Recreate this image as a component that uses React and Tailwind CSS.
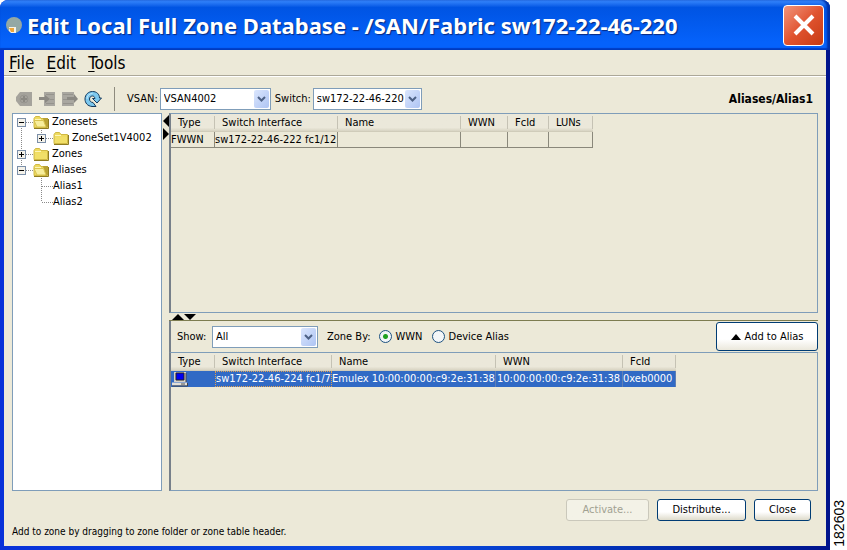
import { useState } from "react";

const tree = [
  { label: "Zonesets", level: 0, toggle: "minus", open: true, rootLine: "bottom" },
  { label: "ZoneSet1V4002", level: 1, toggle: "plus", rootLine: "full" },
  { label: "Zones", level: 0, toggle: "plus", rootLine: "full" },
  { label: "Aliases", level: 0, toggle: "minus", open: true, rootLine: "top" },
  { label: "Alias1", level: 1, leaf: true },
  { label: "Alias2", level: 1, leaf: true, last: true },
];

const memberColumns = [
  { name: "Type", width: "w-[44px]" },
  { name: "Switch Interface", width: "w-[123px]" },
  { name: "Name", width: "w-[123px]" },
  { name: "WWN", width: "w-[47px]" },
  { name: "FcId", width: "w-[41px]" },
  { name: "LUNs", width: "w-[44px]" },
];

const endPortColumns = [
  { name: "Type", width: "w-[44px]" },
  { name: "Switch Interface", width: "w-[117px]" },
  { name: "Name", width: "w-[164px]" },
  { name: "WWN", width: "w-[127px]" },
  { name: "FcId", width: "w-[53px]" },
];

// One 20x16 cell of the tree's guide lines
function Guide({ line, toggle, branch }) {
  return (
    <svg width="20" height="16" className="shrink-0" shapeRendering="crispEdges">
      <g stroke="#8a8a8a" strokeDasharray="1 1">
        {line === "full" && <path d="M8.5 0V16" />}
        {line === "top" && <path d="M8.5 0V8" />}
        {line === "bottom" && <path d="M8.5 8V16" />}
        {(toggle || branch) && <path d="M9 8.5H20" />}
      </g>
      {toggle && (
        <>
          <rect x="4.5" y="4.5" width="8" height="8" fill="#f4f2ea" stroke="#7b8fa8" />
          <path d="M6 8.5H11" stroke="#000" />
          {toggle === "plus" && <path d="M8.5 6V11" stroke="#000" />}
        </>
      )}
    </svg>
  );
}

function Folder({ open }) {
  return (
    <svg width="16" height="16" className="shrink-0">
      <path d="M1 4.5 2.5 2.5H6.5L8 4.5H14.5V13.5H1Z" fill="#efdb60" stroke="#d0b944" />
      <path d="M2 5.5H8" stroke="#fdf6b8" />
      {open ? (
        <>
          <path d="M10 4H15V13L12 14Z" fill="#b9a233" />
          <path d="M1 6.5H10.5L13 13H4Z" fill="#f8ee9c" stroke="#d9c44f" />
        </>
      ) : (
        <path d="M2 7H14V13H2Z" fill="#f1df68" />
      )}
      <path d="M1 14.5H15.5V5" fill="none" stroke="#8f7c22" />
    </svg>
  );
}

function Select({ id, options, width }) {
  return (
    <span className={"relative flex h-[22px] " + width}>
      <select
        id={id}
        className="w-full appearance-none border border-[#7f9db9] bg-white pl-[3px] pr-4 text-[11px] leading-4 outline-none"
      >
        {options.map((o) => (
          <option key={o}>{o}</option>
        ))}
      </select>
      <svg
        width="15"
        height="18"
        className="pointer-events-none absolute right-[2px] top-[2px] rounded-[2px] bg-linear-to-br from-[#dbe6fd] to-[#aec4f3]"
      >
        <path d="M4 7 7.5 10.5 11 7" fill="none" stroke="#4d6185" strokeWidth="2" />
      </svg>
    </span>
  );
}

function HeaderRow({ columns }) {
  return (
    <thead>
      <tr className="h-[18px]">
        {columns.map((c) => (
          <th
            key={c.name}
            className={
              "border-b border-b-[#d0ccba] bg-linear-to-b from-[#ebe8da] from-80% to-[#d8d4c3] p-0 text-left font-normal " +
              c.width
            }
          >
            <div className="h-[13px] border-r border-[#c5c2b4] pl-[7px] leading-[13px]">{c.name}</div>
          </th>
        ))}
      </tr>
    </thead>
  );
}

function Computer() {
  return (
    <svg width="18" height="15" role="img" aria-label="Host">
      <path d="M3 0H15V10H3Z" fill="#d4d0c8" />
      <path d="M5 1H13V8H5Z" fill="#0000f0" stroke="#222" />
      <path d="M1 10.5H16V13.5H1Z" fill="#e4e0d8" />
      <path d="M1 14H16.5V11M15 1V10" fill="none" stroke="#444" />
      <path d="M10 12H14" stroke="#555" />
    </svg>
  );
}

function Toolbar() {
  const tool = "h-4 w-[18px]";
  return (
    <div className="flex items-center gap-[5px]">
      <button aria-label="Back" disabled className={tool}>
        <svg width="18" height="16">
          <path d="M5 1H17V15H5L1 10V6Z" fill="#a5a39c" />
          <circle cx="9" cy="8" r="4" fill="none" stroke="#96948e" />
          <path d="M6 8H12M9 5V11" stroke="#8b8983" strokeWidth="2" />
        </svg>
      </button>
      <button aria-label="Insert" disabled className={tool}>
        <svg width="18" height="16">
          <path d="M6 1H17V15H6Z" fill="#a9a7a0" />
          <path d="M1 6H7V4L12 8 7 12V9H1Z" fill="#8b8983" />
          <path d="M8 3.500H16M12 8.500H16M8 12.500H16" stroke="#95938d" />
        </svg>
      </button>
      <button aria-label="Remove" disabled className={tool}>
        <svg width="18" height="16">
          <path d="M1 1H13V15H1Z" fill="#a9a7a0" />
          <path d="M6 6H13V3L17 8 13 12V9H6Z" fill="#8b8983" />
          <path d="M2 3.500H12M2 8.500H6M2 12.500H12" stroke="#95938d" />
        </svg>
      </button>
      <button aria-label="Refresh" className={tool}>
        <svg width="18" height="16">
          <path
            d="M12 15.500H8C3.500 15 1 12 1 8C1 3.500 4.500.5 8.500.5C12.500.5 15.500 3 15.500 7H17.500L13 12 8.500 7.500H11C10.500 5.500 9.500 5 8.500 5C6.500 5 5.500 6.500 5.500 8C5.500 10 7 11.500 9 11.500Z"
            fill="#7cc8ee"
            stroke="#14395c"
          />
          <path d="M3 8C3 5 5 2.500 8.500 2.500" fill="none" stroke="#c4e9fb" />
        </svg>
      </button>
    </div>
  );
}

function MenuItem({ children }) {
  return (
    <button>
      <span className="underline underline-offset-2">{children[0]}</span>
      {children.slice(1)}
    </button>
  );
}

function PushButton({ children, width, disabled }) {
  return (
    <button
      disabled={disabled}
      className={
        "h-[22px] rounded-[3px] border border-[#003c74] bg-linear-to-b from-white from-60% to-[#dedbcb] disabled:border-[#cac8bb] disabled:from-[#f3f2e7] disabled:to-[#f3f2e7] disabled:text-[#a1a192] " +
        width
      }
    >
      {children}
    </button>
  );
}

export default function App() {
  const [zoneBy, setZoneBy] = useState("wwn");

  const radio =
    "size-[13px] appearance-none rounded-full border border-[#1c5180] bg-[#f3f6f8] checked:bg-[radial-gradient(circle,#21a121_0_2px,#f3f6f8_3px)]";

  return (
    <div className="flex min-h-screen bg-white font-['DejaVu_Sans_Condensed','DejaVu_Sans',sans-serif] text-[11px] leading-4 text-black">
      <div className="flex min-w-0 flex-1 flex-col rounded-t-lg bg-linear-to-r from-[#0831d9] via-[#0b4ae0] to-[#00138c] px-1 pb-1">
        {/* Title bar */}
        <header className="-mx-1 flex h-[50px] shrink-0 items-center gap-1 rounded-t-lg bg-linear-to-b from-[#3a8bff] via-[#0054e3] via-15% to-[#0562fb] to-85% pl-[5px] pr-[6px] shadow-[inset_-3px_0_2px_#0030a8,inset_0_-2px_1px_#0040c8]">
          <svg width="18" height="18" className="shrink-0">
            <circle cx="9" cy="9" r="8" fill="#93a8a5" />
            <path d="M4 11H11V17H6L4 15Z" fill="#f6f2e6" />
            <path d="M4 12H9V16H6Z" fill="#eda63c" />
          </svg>
          <h1 className="min-w-0 flex-1 truncate font-['Noto_Sans',sans-serif] text-[22px] font-bold leading-8 text-white [text-shadow:1px_1px_1px_#0a2a80]">
            Edit Local Full Zone Database - /SAN/Fabric sw172-22-46-220
          </h1>
          <button
            aria-label="Close window"
            className="flex size-[41px] items-center justify-center rounded-[4px] border border-white bg-linear-to-br from-[#f0937a] via-[#e0532f] to-[#c63a10]"
          >
            <svg width="22" height="22">
              <path d="M2 2 20 20M20 2 2 20" stroke="#fff" strokeWidth="4" />
            </svg>
          </button>
        </header>

        <div className="flex flex-1 flex-col bg-[#ece9d8]">
          <nav className="flex h-[26px] items-center gap-3 border-b border-[#aca899] px-[5px] text-[17px]">
            <MenuItem>File</MenuItem>
            <MenuItem>Edit</MenuItem>
            <MenuItem>Tools</MenuItem>
          </nav>

          <main className="flex flex-1 flex-col border-t border-white px-2">
            <div className="flex h-9 items-center pt-2 pl-[3px]">
              <Toolbar />
              <div className="ml-3 h-6 border-l border-[#8e8b7e]" />
              <label htmlFor="vsan" className="ml-3 mr-[2px]">VSAN:</label>
              <Select id="vsan" width="w-[111px]" options={["VSAN4002"]} />
              <label htmlFor="switch" className="ml-1 mr-[2px]">Switch:</label>
              <Select id="switch" width="w-[109px]" options={["sw172-22-46-220"]} />
              <div className="ml-auto pr-[5px] text-xs font-bold">Aliases/Alias1</div>
            </div>

            <div className="flex flex-1">
              <ul className="w-[150px] shrink-0 border border-[#7f9db9] bg-white">
                {tree.map((n) => (
                  <li key={n.label} className="flex h-4 items-center whitespace-nowrap">
                    <Guide line={n.rootLine} toggle={n.level === 0 && n.toggle} />
                    {n.level === 1 && (
                      <Guide
                        line={n.leaf && !n.last ? "full" : "top"}
                        toggle={n.toggle}
                        branch={n.leaf}
                      />
                    )}
                    {!n.leaf && <Folder open={n.open} />}
                    <span className={n.leaf ? "" : "pl-[3px]"}>{n.label}</span>
                  </li>
                ))}
              </ul>

              {/* Vertical divider */}
              <svg width="7" height="30" className="shrink-0">
                <path d="M7 2V14L1 8Z" />
                <path d="M1 15V27L7 21Z" />
              </svg>

              <div className="flex min-w-0 flex-1 flex-col">
                <div className="min-h-[198px] flex-1 border border-l-2 border-[#7f9db9] border-l-[#77808a]">
                  <table className="w-[422px] table-fixed border-separate border-spacing-0 whitespace-nowrap">
                    <HeaderRow columns={memberColumns} />
                    <tbody>
                      <tr className="h-4">
                        {["FWWN", "sw172-22-46-222 fc1/12", "", "", "", ""].map((v, i) => (
                          <td key={i} className="border-b border-r border-[#8a887b] p-0 leading-[15px]">
                            {v}
                          </td>
                        ))}
                      </tr>
                    </tbody>
                  </table>
                </div>

                {/* Horizontal divider */}
                <div className="h-2 border-b border-[#7d7c50] pl-[3px]">
                  <svg width="26" height="7">
                    <path d="M0 7H12L6 1Z" />
                    <path d="M12 1H24L18 7Z" />
                  </svg>
                </div>

                <div className="flex h-[31px] items-center border-l-2 border-[#77808a] pl-[6px]">
                  <label htmlFor="show" className="w-[35px]">Show:</label>
                  <Select id="show" width="w-[106px]" options={["All"]} />
                  <fieldset className="ml-[9px] flex items-center">
                    <legend className="float-left mr-2">Zone By:</legend>
                    <label className="flex items-center gap-1">
                      <input
                        type="radio"
                        name="zoneBy"
                        className={radio}
                        checked={zoneBy === "wwn"}
                        onChange={() => setZoneBy("wwn")}
                      />
                      WWN
                    </label>
                    <label className="ml-[9px] flex items-center gap-1">
                      <input
                        type="radio"
                        name="zoneBy"
                        className={radio}
                        checked={zoneBy === "alias"}
                        onChange={() => setZoneBy("alias")}
                      />
                      Device Alias
                    </label>
                  </fieldset>
                  <button className="ml-auto flex h-[29px] w-[102px] items-center justify-center gap-1 rounded-[3px] border border-[#003c74] bg-linear-to-b from-white from-60% to-[#ebe8dc]">
                    <svg width="10" height="6">
                      <path d="M0 6H10L5 0Z" />
                    </svg>
                    Add to Alias
                  </button>
                </div>

                <div className="min-h-[139px] border border-l-2 border-[#7f9db9] border-l-[#77808a]">
                  <table className="w-[505px] table-fixed border-separate border-spacing-0 whitespace-nowrap">
                    <HeaderRow columns={endPortColumns} />
                    <tbody>
                      <tr className="h-4 bg-[#316ac5] text-white">
                        <td className="p-0"><Computer /></td>
                        <td className="border border-dotted border-[#e0a050] p-0 leading-[14px]">sw172-22-46-224 fc1/7</td>
                        <td className="border-r border-[#5f7fb4] p-0">Emulex 10:00:00:00:c9:2e:31:38</td>
                        <td className="border-r border-[#5f7fb4] p-0 pl-px">10:00:00:00:c9:2e:31:38</td>
                        <td className="border-r border-[#5f7fb4] p-0">0xeb0000</td>
                      </tr>
                    </tbody>
                  </table>
                </div>
              </div>
            </div>

            <div className="flex justify-end gap-2 pr-[7px] pt-2">
              <PushButton width="w-[83px]" disabled>Activate...</PushButton>
              <PushButton width="w-[89px]">Distribute...</PushButton>
              <PushButton width="w-[57px]">Close</PushButton>
            </div>
            <p className="pt-[3px] pb-[6px] text-[10px] leading-4">
              Add to zone by dragging to zone folder or zone table header.
            </p>
          </main>
        </div>
      </div>

      <aside className="flex w-[17px] shrink-0 items-end justify-center pb-[3px]">
        <span className="rotate-180 font-['Liberation_Sans',sans-serif] text-sm leading-4 [writing-mode:vertical-rl]">
          182603
        </span>
      </aside>
    </div>
  );
}
